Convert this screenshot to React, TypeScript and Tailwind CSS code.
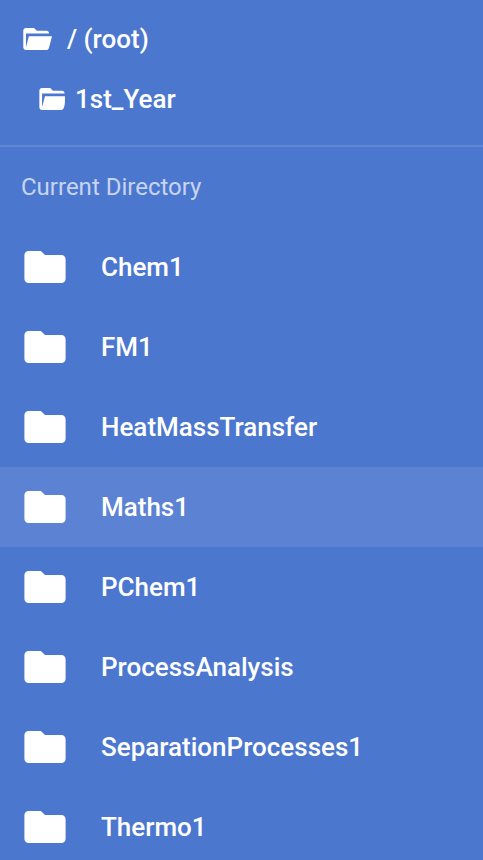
const folders = ["Chem1", "FM1", "HeatMassTransfer", "Maths1", "PChem1", "ProcessAnalysis", "SeparationProcesses1", "Thermo1"];

function OpenFolder({ nested = false }: { nested?: boolean }) {
  return (
    <svg viewBox={nested ? "1.75 4 19.1 16" : "1.8 4 21.4 16"} preserveAspectRatio="none" fill="currentColor" className={nested ? "h-[22px] w-[26px]" : "h-[22px] w-[29px]"}>
      {nested ? (
        <path d="M18 20H4c-1.11 0-2-.9-2-2V6c0-1.11.89-2 2-2h6l2 2h6.5a2 2 0 0 1 2 2H4v10l2.14-8H20.8v3.7c0 2.1-.4 3.8-.9 4.9-.35.9-1 1.4-1.9 1.4Z" />
      ) : (
        <path d="M19 20H4c-1.11 0-2-.9-2-2V6c0-1.11.89-2 2-2h6l2 2h7a2 2 0 0 1 2 2H4v10l2.14-8h17.07l-2.28 8.5c-.23.87-1.01 1.5-1.93 1.5Z" />
      )}
    </svg>
  );
}

function ClosedFolder() {
  return (
    <svg viewBox="1.8 4 20.4 16" preserveAspectRatio="none" fill="currentColor" className="h-8 w-[42px]">
      <path d="M10 4H4c-1.11 0-2 .89-2 2v12c0 1.1.9 2 2 2h16c1.1 0 2-.9 2-2V8c0-1.11-.9-2-2-2h-8l-2-2Z" />
    </svg>
  );
}

export default function App() {
  return (
    <div className="h-[860px] w-[483px] overflow-hidden bg-[#4c77cf] font-['Roboto',sans-serif] text-white">
      <nav className="h-[147px] border-b-2 border-[#6188d6] pt-[9px] text-[26px] font-medium">
        <div className="flex h-[60px] items-center pl-[23px]">
          <OpenFolder />
          <span className="ml-[15px]">/ (root)</span>
        </div>
        <div className="flex h-[60px] items-center pl-[39px]">
          <OpenFolder nested />
          <span className="ml-[10px]">1st_Year</span>
        </div>
      </nav>
      <h2 className="flex h-20 items-center pl-[21px] text-2xl font-normal text-white/70">Current Directory</h2>
      <ul>
        {folders.map((name) => (
          <li key={name} className={`flex h-20 items-center pl-6 text-[26px] font-medium ${name === "Maths1" ? "bg-[#5c83d3]" : ""}`}>
            <ClosedFolder />
            <span className="ml-[35px]">{name}</span>
          </li>
        ))}
      </ul>
    </div>
  );
}
